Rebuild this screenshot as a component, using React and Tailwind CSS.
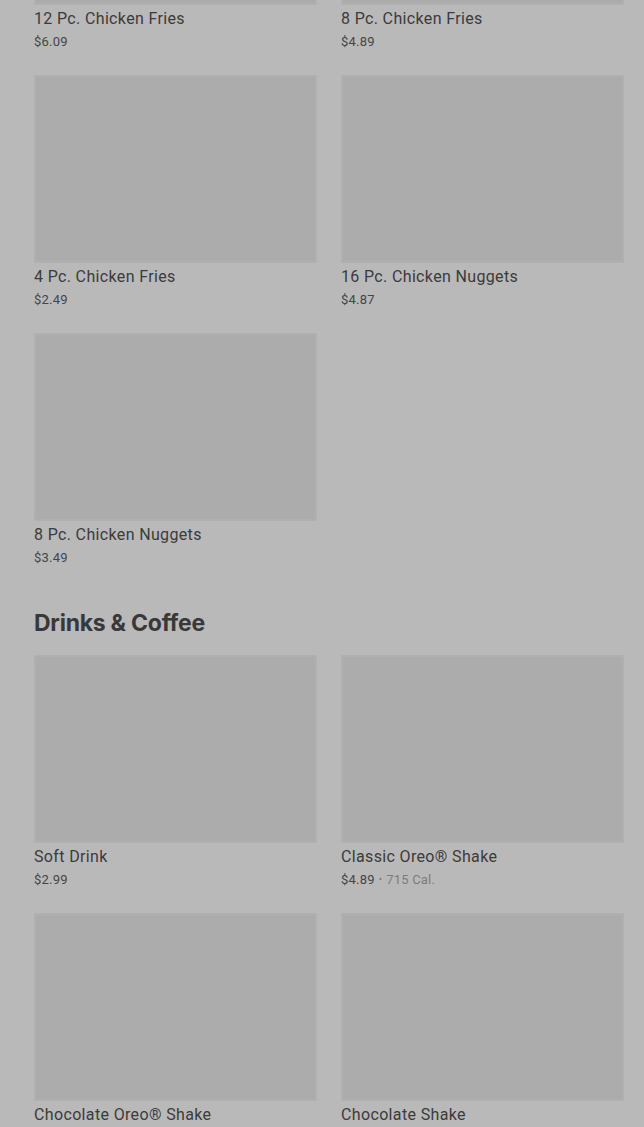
import React from "react";

const Card = ({ title, price, cal }) => (
  <div className="flex flex-col">
    <div className="h-[188px] bg-[#acacac] border-[2px] border-[#b0b0b0]" />
    <div className="mt-[3px] text-[16px] leading-[22px] text-[#3b3b3b] tracking-[0.35px]">{title}</div>
    <div className="mt-[3px] text-[13px] leading-[18px] text-[#454545] tracking-[0.2px] flex items-center">
      <span>{price}</span>
      {cal && (
        <>
          <span className="mx-[4px] text-[#7c7c7c] text-[10px]">•</span>
          <span className="text-[#7c7c7c]">{cal}</span>
        </>
      )}
    </div>
  </div>
);

export default function App() {
  const ff = { fontFamily: "Roboto, 'Liberation Sans', sans-serif" };
  return (
    <div className="h-[1127px] bg-[#b9b9b9] overflow-hidden" style={ff}>
      <div className="pl-[34px] pr-[20px] -mt-[183px]">
        <div className="grid grid-cols-2 gap-x-[24px] gap-y-[24px]">
          <Card title="12 Pc. Chicken Fries" price="$6.09" />
          <Card title="8 Pc. Chicken Fries" price="$4.89" />
          <Card title="4 Pc. Chicken Fries" price="$2.49" />
          <Card title="16 Pc. Chicken Nuggets" price="$4.87" />
          <Card title="8 Pc. Chicken Nuggets" price="$3.49" />
        </div>
        <h2
          className="mt-[42px] mb-[18px] text-[23px] leading-[28px] font-bold text-[#383838] tracking-[-0.25px]"
          style={{ fontFamily: "Inter, Roboto, sans-serif" }}
        >
          Drinks &amp; Coffee
        </h2>
        <div className="grid grid-cols-2 gap-x-[24px] gap-y-[24px]">
          <Card title="Soft Drink" price="$2.99" />
          <Card title="Classic Oreo® Shake" price="$4.89" cal="715 Cal." />
          <Card title="Chocolate Oreo® Shake" price="$4.89" />
          <Card title="Chocolate Shake" price="$4.09" />
        </div>
      </div>
    </div>
  );
}
